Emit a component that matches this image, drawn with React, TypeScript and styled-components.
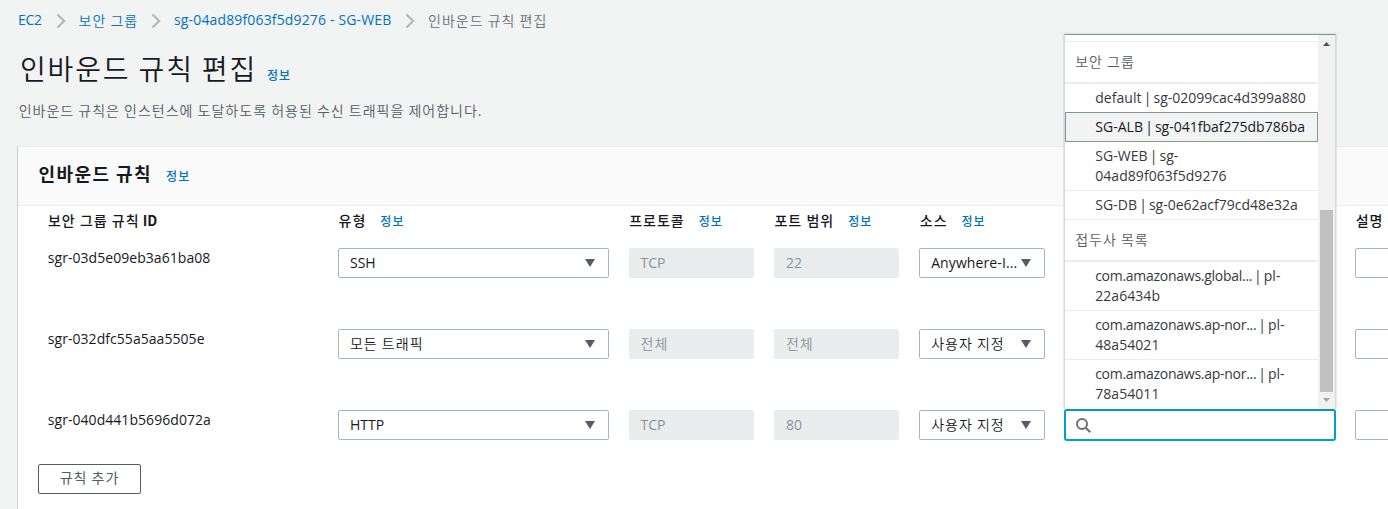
import React from "react";
import styled, { createGlobalStyle, css } from "styled-components";

const latin = `"Open Sans", "Noto Sans", "Noto Sans CJK KR", sans-serif`;
const korean = `"Noto Sans CJK KR", "Noto Sans", sans-serif`;

const GlobalStyle = createGlobalStyle`
  * { box-sizing: border-box; }
  html, body { margin: 0; overflow: hidden; background: #f2f3f3; }
  body { font: 14px/20px ${latin}; color: #16191f; }
`;

const Page = styled.div`
  width: 1388px;
  height: 509px;
  overflow: hidden;
  padding: 10px 0 0 18px;
`;

const ko = css`
  font-family: ${korean};
  letter-spacing: 1px;
`;

const Ko = styled.span<{ $light?: boolean }>`
  ${ko}
  display: block;
  height: 22px;
  font-weight: ${(p) => (p.$light ? 350 : "inherit")};
`;

const En = styled.span<{ $ls?: number }>`
  letter-spacing: ${(p) => p.$ls ?? 0}px;
`;

const Pipe = styled.span`
  margin: 0 -1.6px;
`;

const Breadcrumbs = styled.nav`
  display: flex;
  height: 20px;
  white-space: nowrap;
  color: #0073bb;
`;

const Crumb = styled.span<{ $width: number; $current?: boolean }>`
  width: ${(p) => p.$width}px;
  color: ${(p) => (p.$current ? "#687078" : "inherit")};
`;

const CrumbArrow = styled.svg`
  width: 10px;
  height: 16px;
  margin: 3px 13px 0 13px;
  flex: none;
`;

const TitleRow = styled.div`
  display: flex;
  align-items: baseline;
  margin-top: 19px;
  height: 40px;
  white-space: nowrap;
`;

const Title = styled.h1`
  ${ko}
  margin: 0;
  padding-left: 2px;
  width: 249px;
  font-size: 28px;
  line-height: 38px;
  font-weight: 350;
  letter-spacing: 1.85px;
`;

const Info = styled.a`
  ${ko}
  font-size: 12px;
  line-height: 20px;
  font-weight: 500;
  color: #0073bb;
`;

const Description = styled.p`
  ${ko}
  margin: 11px 0 0;
  padding-left: 0.7px;
  color: #545b64;
  font-weight: 350;
  white-space: nowrap;
`;

const Panel = styled.section`
  width: 1400px;
  height: 400px;
  margin: 26px 0 0 -1px;
  border: 1px solid #eaeded;
  border-left-color: #ccd1d1;
  background: #fff;
`;

const PanelHeader = styled.header`
  display: flex;
  align-items: baseline;
  height: 59px;
  padding: 13px 0 0 20.6px;
  background: #fafafa;
  border-bottom: 1px solid #eaeded;
`;

const PanelTitle = styled.h2`
  ${ko}
  margin: 0;
  width: 127.5px;
  font-size: 18px;
  line-height: 26px;
  font-weight: 700;
  letter-spacing: 1.4px;
`;

const Grid = styled.div`
  display: grid;
  grid-template-columns: 270.6px 270.6px 125.3px 125.3px 126px 269.9px 270.6px;
  column-gap: 20px;
  padding-left: 29.4px;
`;

const HeadRow = styled(Grid)`
  height: 42px;
  padding-top: 4px;
`;

const HeadCell = styled.div`
  display: flex;
  gap: 14px;
  padding-left: 0.6px;
  align-items: baseline;
  white-space: nowrap;
  font-weight: 500;
`;

const IdLabel = styled.b`
  font-weight: 700;
  letter-spacing: 0;
  margin-left: -1px;
`;

const Row = styled(Grid)`
  height: 81px;
`;

const RuleId = styled.div`
  padding-left: 0.4px;
  line-height: 20px;
`;

const Field = styled.div<{ $disabled?: boolean }>`
  display: flex;
  align-items: center;
  justify-content: space-between;
  height: 30px;
  padding: 0 12px 0 11px;
  border: 1px solid ${(p) => (p.$disabled ? "#eaeded" : "#aab7b8")};
  border-radius: 2px;
  background: ${(p) => (p.$disabled ? "#eaeded" : "#fff")};
  color: ${(p) => (p.$disabled ? "#879596" : "#16191f")};
  white-space: nowrap;
`;

const Caret = styled.svg`
  width: 12px;
  height: 10px;
  flex: none;
`;

const SearchCell = styled.div`
  position: relative;
`;

const SearchBox = styled.div`
  display: flex;
  align-items: center;
  width: 272px;
  height: 32px;
  margin: -1px 0 0 -1px;
  padding-left: 9px;
  border: 2px solid #00a1c9;
  border-radius: 3px;
  background: #fff;
`;

const Menu = styled.div`
  position: absolute;
  left: -1px;
  bottom: 82px;
  width: 272px;
  height: 375px;
  display: flex;
  border: 1px solid #d5dbdb;
  border-top-color: #879596;
  border-bottom: 0;
  background: #fff;
  box-shadow: 0 0 2px rgba(0, 28, 36, 0.25);
`;

const Options = styled.div`
  width: 253px;
  padding-top: 6px;
`;

const GroupLabel = styled.div`
  ${ko}
  height: 43px;
  padding: 9px 0 0 10px;
  border-top: 1px solid #eaeded;
  border-bottom: 2px solid #eaeded;
  font-weight: 350;
  color: #545b64;
`;

const Option = styled.div<{ $active?: boolean }>`
  padding: 4px 8px 4px 30px;
  border-bottom: 1px solid #eaeded;
  color: #37393f;
  white-space: nowrap;
  & + ${GroupLabel} {
    height: 42px;
    border-top: 0;
  }
  ${(p) =>
    p.$active &&
    css`
      margin-top: -1px;
      padding-left: 29px;
      border: 1px solid #879596;
      background: #f2f3f3;
      color: #16191f;
    `}
  &:last-child { border-bottom-color: #fff; }
`;

const Scrollbar = styled.div`
  flex: 1;
  display: flex;
  flex-direction: column;
  align-items: center;
  background: #f1f1f1;
`;

const ScrollArrow = styled.svg`
  width: 17px;
  height: 17px;
  flex: none;
`;

const Thumb = styled.div`
  width: 13px;
  height: 182px;
  margin-top: 158px;
  background: #c1c1c1;
`;

const AddButton = styled.button`
  ${ko}
  display: block;
  width: 103px;
  height: 30px;
  margin: -27px 0 0 20px;
  padding: 0 0 4px;
  border: 1px solid #545b64;
  border-radius: 2px;
  background: #fff;
  color: #545b64;
  font-size: 14px;
  line-height: 24px;
  font-weight: 400;
`;

const Arrow = () => (
  <CrumbArrow viewBox="0 0 10 16">
    <path d="M1.5 1.5 8.2 8 1.5 14.5" fill="none" stroke="#aab7b8" strokeWidth="2" />
  </CrumbArrow>
);

const DownCaret = () => (
  <Caret viewBox="0 0 12 10">
    <path d="M1 1h10L6 9z" fill="#545b64" />
  </Caret>
);

const isKorean = (s: string) => /[가-힣]/.test(s);
const Text = ({ children, ls }: { children: string; ls?: number }) =>
  isKorean(children) ? <Ko $light>{children}</Ko> : <En $ls={ls}>{children}</En>;

const rules = [
  { id: "sgr-03d5e09eb3a61ba08", type: "SSH", protocol: "TCP", port: "22", source: "Anywhere-I..." },
  { id: "sgr-032dfc55a5aa5505e", type: "모든 트래픽", protocol: "전체", port: "전체", source: "사용자 지정" },
  { id: "sgr-040d441b5696d072a", type: "HTTP", protocol: "TCP", port: "80", source: "사용자 지정" },
];

const groups = [
  {
    label: "보안 그룹",
    options: [
      ["default | sg-02099cac4d399a880"],
      ["SG-ALB | sg-041fbaf275db786ba"],
      ["SG-WEB | sg-", "04ad89f063f5d9276"],
      ["SG-DB | sg-0e62acf79cd48e32a"],
    ],
  },
  {
    label: "접두사 목록",
    options: [
      ["com.amazonaws.global... | pl-", "22a6434b"],
      ["com.amazonaws.ap-nor... | pl-", "48a54021"],
      ["com.amazonaws.ap-nor... | pl-", "78a54011"],
    ],
  },
];

const OptionLine = ({ text }: { text: string }) => {
  const [name, id] = text.split("|");
  return (
    <div>
      <En $ls={name.startsWith("com.") ? -0.27 : 0.06}>{name}</En>
      {id && (
        <>
          <Pipe>|</Pipe>
          <En>{id}</En>
        </>
      )}
    </div>
  );
};

const SourceMenu = () => (
  <Menu>
    <Options>
      {groups.map((g) => (
        <React.Fragment key={g.label}>
          <GroupLabel>{g.label}</GroupLabel>
          {g.options.map((lines) => (
            <Option key={lines.join("")} $active={lines[0].startsWith("SG-ALB")}>
              {lines.map((l) => (
                <OptionLine key={l} text={l} />
              ))}
            </Option>
          ))}
        </React.Fragment>
      ))}
    </Options>
    <Scrollbar>
      <ScrollArrow viewBox="0 0 17 17">
        <path d="M5 11h7L8.5 7z" fill="#505050" />
      </ScrollArrow>
      <Thumb />
      <ScrollArrow viewBox="0 0 17 17">
        <path d="M5 6h7L8.5 10z" fill="#a3a3a3" />
      </ScrollArrow>
    </Scrollbar>
  </Menu>
);

export default function App() {
  return (
    <Page>
      <GlobalStyle />
      <Breadcrumbs>
        <Crumb $width={24.5}>
          <En $ls={-0.3}>EC2</En>
        </Crumb>
        <Arrow />
        <Crumb $width={59.5}>
          <Ko $light>보안 그룹</Ko>
        </Crumb>
        <Arrow />
        <Crumb $width={218}>
          <En $ls={0.15}>sg-04ad89f063f5d9276 - SG-WEB</En>
        </Crumb>
        <Arrow />
        <Crumb $width={130} $current>
          <Ko $light>인바운드 규칙 편집</Ko>
        </Crumb>
      </Breadcrumbs>
      <TitleRow>
        <Title>인바운드 규칙 편집</Title>
        <Info>정보</Info>
      </TitleRow>
      <Description>인바운드 규칙은 인스턴스에 도달하도록 허용된 수신 트래픽을 제어합니다.</Description>
      <Panel>
        <PanelHeader>
          <PanelTitle>인바운드 규칙</PanelTitle>
          <Info>정보</Info>
        </PanelHeader>
        <HeadRow>
          <HeadCell>
            <Ko>
              보안 그룹 규칙 <IdLabel>ID</IdLabel>
            </Ko>
          </HeadCell>
          {["유형", "프로토콜", "포트 범위", "소스"].map((h) => (
            <HeadCell key={h}>
              <Ko>{h}</Ko>
              <Info>정보</Info>
            </HeadCell>
          ))}
          <HeadCell />
          <HeadCell>
            <Ko>설명 - 선택 사항</Ko>
          </HeadCell>
        </HeadRow>
        {rules.map((r, i) => (
          <Row key={r.id}>
            <RuleId>
              <Text ls={0.05}>{r.id}</Text>
            </RuleId>
            <Field>
              <Text>{r.type}</Text>
              <DownCaret />
            </Field>
            <Field $disabled>
              <Text>{r.protocol}</Text>
            </Field>
            <Field $disabled>
              <Text>{r.port}</Text>
            </Field>
            <Field>
              <Text ls={0.1}>{r.source}</Text>
              <DownCaret />
            </Field>
            <SearchCell>
              {i === 2 && (
                <>
                  <SourceMenu />
                  <SearchBox>
                    <svg width="17" height="17" viewBox="0 0 17 17" fill="none" stroke="#687078" strokeWidth="2">
                      <circle cx="7" cy="7" r="5" />
                      <path d="M10.7 10.7 15.3 15.3" />
                    </svg>
                  </SearchBox>
                </>
              )}
            </SearchCell>
            <Field />
          </Row>
        ))}
        <AddButton>규칙 추가</AddButton>
      </Panel>
    </Page>
  );
}
